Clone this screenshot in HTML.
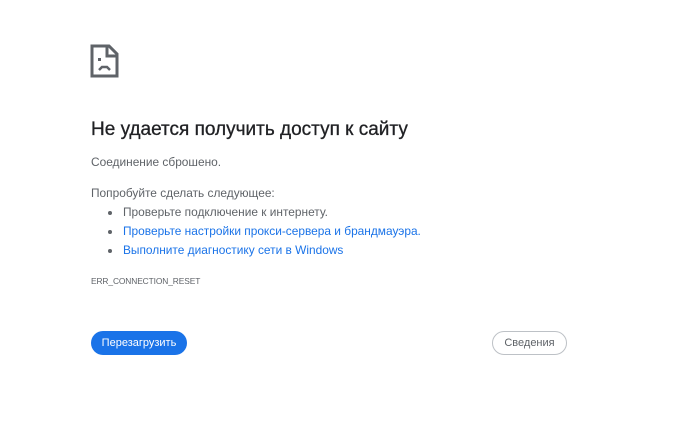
<!DOCTYPE html>
<html><head><meta charset="utf-8"><style>
body{margin:0;width:700px;height:436px;background:#fff;font-family:"Liberation Sans","DejaVu Sans",sans-serif;color:#5f6368;position:relative;overflow:hidden}
.a{position:absolute;white-space:nowrap}
h1{position:absolute;left:91px;top:119px;margin:0;font-size:19px;font-weight:normal;color:#202124;-webkit-text-stroke:0.3px #202124}
.t{font-size:11.9px;color:#5f6368}
.l{color:#1a73e8}
.dot{position:absolute;width:4px;height:4px;border-radius:50%;background:#5f6368}
.b1{position:absolute;left:91px;top:331px;width:96px;height:24px;border-radius:12px;background:#1a73e8;color:#fff;font-size:11px;text-align:center;line-height:24px}
.b2{position:absolute;left:492px;top:331px;width:73px;height:22px;border-radius:12px;border:1px solid #bdc1c6;color:#5f6368;font-size:11px;text-align:center;line-height:22px}
</style></head><body>
<svg class="a" style="left:90px;top:44px" width="30" height="35" viewBox="0 0 30 35">
<path d="M2 2 H19 L27 10 V32 H2 Z" fill="none" stroke="#5f6368" stroke-width="3"/>
<path d="M17 2 V12 H27" fill="none" stroke="#5f6368" stroke-width="3"/>
<rect x="8" y="14" width="3" height="3" fill="#5f6368"/>
<path d="M9 26 L12 23 H17 L20 26" fill="none" stroke="#5f6368" stroke-width="2.5"/>
</svg>
<h1>Не удается получить доступ к сайту</h1>
<div class="a t" style="left:91px;top:155px">Соединение сброшено.</div>
<div class="a t" style="left:91px;top:186px">Попробуйте сделать следующее:</div>
<div class="dot" style="left:108px;top:211px"></div>
<div class="dot" style="left:108px;top:230px"></div>
<div class="dot" style="left:108px;top:249px"></div>
<div class="a t" style="left:123px;top:205px">Проверьте подключение к интернету.</div>
<div class="a t l" style="left:123px;top:224px">Проверьте настройки прокси-сервера и брандмауэра.</div>
<div class="a t l" style="left:123px;top:243px">Выполните диагностику сети в Windows</div>
<div class="a" style="left:91px;top:276px;font-size:8.4px;letter-spacing:-0.1px;color:#5f6368">ERR_CONNECTION_RESET</div>
<div class="b1">Перезагрузить</div>
<div class="b2">Сведения</div>
</body></html>
